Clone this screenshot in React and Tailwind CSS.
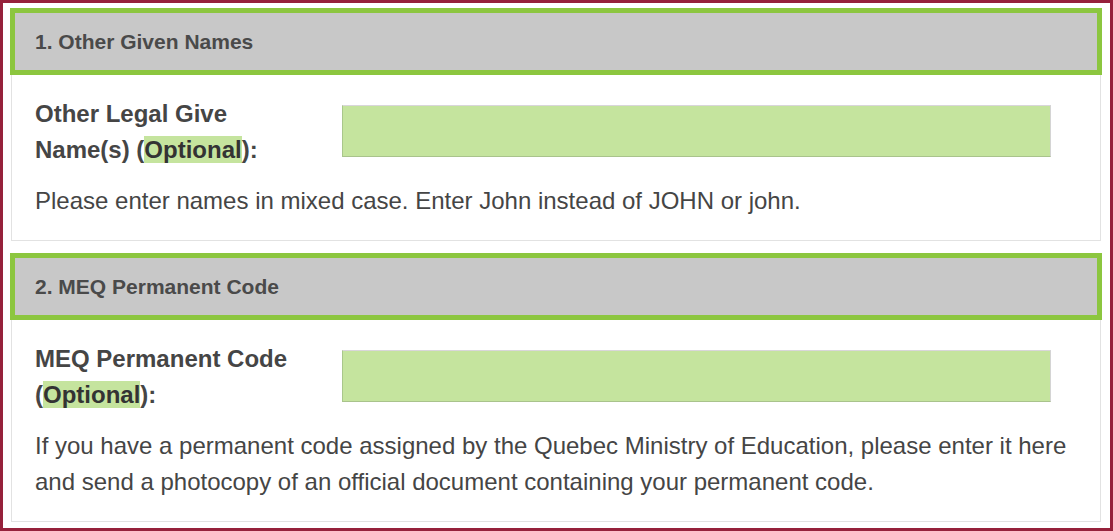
import React from 'react';

const sections = [
    {
        title: '1. Other Given Names',
        label: ['Other Legal Give', 'Name(s) ('],
        help: 'Please enter names in mixed case. Enter John instead of JOHN or john.',
    },
    {
        title: '2. MEQ Permanent Code',
        label: ['MEQ Permanent Code', '('],
        help: 'If you have a permanent code assigned by the Quebec Ministry of Education, please enter it here and send a photocopy of an official document containing your permanent code.',
    },
];

function Section({ title, label, help }) {
    return (
        <div>
            {/* Header */}
            <div className="h-[67px] border-[5px] border-[#8cc63f] bg-[#c8c8c8] flex items-center pl-5">
                <h3 className="text-[21px] font-bold text-[#4a4a4a] leading-none">{title}</h3>
            </div>

            {/* Body */}
            <div className="mx-px border-x border-b border-[#e2e2e2] bg-white pt-[21px] pb-[21px] pl-[23px] pr-6">
                <div className="flex items-start">
                    <label className="w-[307px] shrink-0 text-[24px] leading-9 font-bold text-[#454545]">
                        {label[0]}
                        <br />
                        {label[1]}
                        <span className="bg-[#c5e49e] text-[#333]">Optional</span>):
                    </label>
                    <input
                        type="text"
                        className="mt-[9px] w-[709px] h-[52px] bg-[#c5e49e] outline-none border border-t-[#d9d6da] border-r-[#d4d4d4] border-l-[#a9c78b] border-b-[#a9c38c]"
                    />
                </div>
                <p className="mt-[15px] text-[24px] leading-9 text-[#454545]">{help}</p>
            </div>
        </div>
    );
}

export default function App() {
    return (
        <div
            className="w-[1113px] min-h-[531px] bg-white border-[3px] border-b-4 border-[#96213b] pt-[5px] pl-[7px] pr-[8px] pb-[6px] flex flex-col gap-3"
            style={{ fontFamily: '"Liberation Sans", Arial, sans-serif' }}
        >
            {sections.map(s => (
                <Section key={s.title} {...s} />
            ))}
        </div>
    );
}
